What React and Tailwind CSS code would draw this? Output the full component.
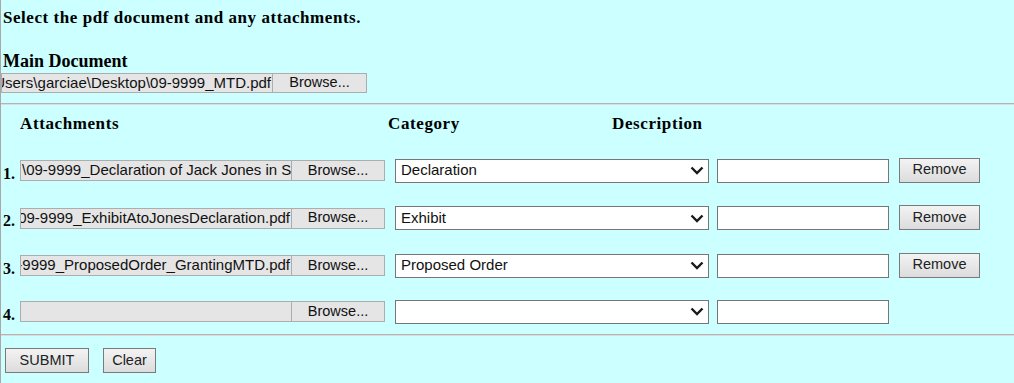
import React from 'react'

const rows = [
  { n: '1.', file: '\\09-9999_Declaration of Jack Jones in Support of Motion.pdf', align: 'start', category: 'Declaration', remove: true },
  { n: '2.', file: 'C:\\Users\\garciae\\Desktop\\09-9999_ExhibitAtoJonesDeclaration.pdf', align: 'end', category: 'Exhibit', remove: true },
  { n: '3.', file: 'C:\\Users\\garciae\\Desktop\\09-9999_ProposedOrder_GrantingMTD.pdf', align: 'end', category: 'Proposed Order', remove: true },
  { n: '4.', file: '', align: 'end', category: '', remove: false },
]

const Chevron = () => (
  <svg width="14" height="9" viewBox="0 0 14 9" className="shrink-0">
    <polyline points="1.5,1.5 7,7 12.5,1.5" fill="none" stroke="#1a1a1a" strokeWidth="2.4" />
  </svg>
)

const Button = ({ label, className }) => (
  <div className={`h-[25px] flex items-center justify-center border border-[#7a7a7a] bg-gradient-to-b from-[#f3f3f3] to-[#dcdcdc] text-[#222] text-[14.5px] ${className}`}>
    {label}
  </div>
)

const App = () => {
  return (
    <div className="w-[1014px] h-[383px] bg-[#ccffff] border-l border-[#a8a8a8] overflow-hidden font-['Liberation_Serif',serif] text-black">
      {/* heading */}
      <div className="pl-[2px] pt-[8px] text-[17px] tracking-[0.55px] leading-[20px] font-bold">Select the pdf document and any attachments.</div>
      <div className="pl-[2px] mt-[22px] text-[18px] leading-[22px] font-bold">Main Document</div>

      {/* main document file input */}
      <div className="mt-[1px] flex h-[20px] font-['Liberation_Sans',sans-serif] text-[15px] text-[#111]">
        <div className="w-[272px] h-full bg-[#e5e5e5] border border-[#adadad] overflow-hidden flex items-center justify-end whitespace-nowrap pr-[1px]">
          C:\Users\garciae\Desktop\09-9999_MTD.pdf
        </div>
        <div className="w-[94px] h-full bg-[#e5e5e5] border border-l-0 border-[#adadad] flex items-center justify-center text-[14.5px]">Browse...</div>
      </div>

      <div className="mt-[10px] h-[2px] bg-[#b4b4b4] border-b border-[#dcdcdc]" />

      {/* attachments header */}
      <div className="mt-[9px] flex text-[17px] tracking-[0.6px] leading-[20px] font-bold">
        <div className="w-[19px]" />
        <div className="w-[368px]">Attachments</div>
        <div className="w-[224px]">Category</div>
        <div>Description</div>
      </div>

      {/* attachment rows */}
      <div className="mt-[13px]">
        {rows.map((row, i) => (
          <div key={row.n} className={`flex items-center pl-[2px] ${i === 1 ? 'h-[48px]' : i === 3 ? 'h-[45px]' : 'h-[47px]'}`}>
            <div className="w-[17px] pt-[6px] text-[16px] font-bold leading-[20px]">{row.n}</div>
            <div className="flex h-[21px] font-['Liberation_Sans',sans-serif] text-[15px] text-[#111]">
              <div className={`w-[272px] h-full bg-[#e5e5e5] border border-[#adadad] overflow-hidden flex items-center whitespace-nowrap ${row.align === 'start' ? 'justify-start pl-[1px]' : 'justify-end pr-[1px]'}`}>
                {row.file}
              </div>
              <div className="w-[93px] h-full bg-[#e5e5e5] border border-l-0 border-[#adadad] flex items-center justify-center text-[14.5px]">Browse...</div>
            </div>
            <div className="ml-[10px] w-[314px] h-[24px] bg-white border border-[#767676] flex items-center justify-between pl-[5px] pr-[4px] font-['Liberation_Sans',sans-serif] text-[15px] text-[#111]">
              <span>{row.category}</span>
              <Chevron />
            </div>
            <div className="ml-[8px] w-[172px] h-[24px] bg-white border border-[#767676]" />
            {row.remove && (
              <Button label="Remove" className="ml-[10px] w-[81px] font-['Liberation_Sans',sans-serif] -mt-[1px]" />
            )}
          </div>
        ))}
      </div>

      <div className="h-[2px] bg-[#b4b4b4] border-b border-[#dcdcdc]" />

      {/* actions */}
      <div className="mt-[12px] flex font-['Liberation_Sans',sans-serif]">
        <Button label="SUBMIT" className="ml-[4px] w-[84px] h-[24px]" />
        <Button label="Clear" className="ml-[14px] w-[53px] h-[24px]" />
      </div>
    </div>
  )
}

export default App
